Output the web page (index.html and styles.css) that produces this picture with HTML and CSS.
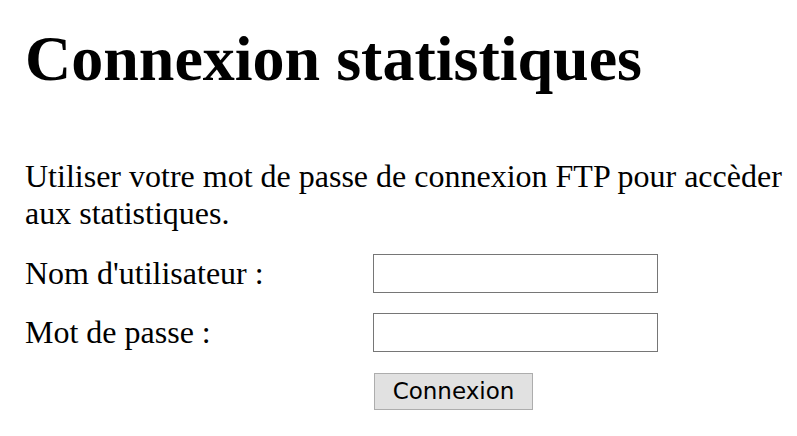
FILE: index.html
```html
<!DOCTYPE html>
<html lang="fr">
<head>
  <meta charset="UTF-8">
  <title>Connexion statistiques</title>
  <link rel="stylesheet" href="styles.css">
</head>
<body>

  <h1>Connexion statistiques</h1>

  <p class="intro">Utiliser votre mot de passe de connexion FTP pour accèder aux statistiques.</p>

  <form class="login" method="post" action="">
    <label for="user">Nom d'utilisateur :</label>
    <input type="text" id="user" name="user">

    <label for="pass">Mot de passe :</label>
    <input type="password" id="pass" name="pass">

    <span></span>
    <div><button type="submit">Connexion</button></div>
  </form>

</body>
</html>
```

FILE: styles.css
```css
body {
  margin: 0;
  padding: 0 4px 0 25px;
  background: #fff;
  color: #000;
  font-family: "Liberation Serif", "Times New Roman", serif;
  font-size: 32px;
  line-height: 37px;
}
h1 {
  font-size: 64px;
  font-weight: bold;
  margin: 22px 0 62px;
  line-height: 74px;
}
.intro {
  margin: 0 0 22px;
}
.login {
  display: grid;
  grid-template-columns: 348px 285px;
  row-gap: 20px;
  align-items: center;
}
.login input {
  box-sizing: border-box;
  width: 285px;
  height: 39px;
  margin: 0;
  border: 1px solid #767676;
  font-size: 20px;
  padding: 2px 4px;
}
button {
  box-sizing: border-box;
  width: 159px;
  height: 37px;
  margin: 1px 0 0 1px;
  padding: 0;
  background: #e1e1e1;
  border: 1px solid #adadad;
  color: #000;
  font-family: "DejaVu Sans", Verdana, sans-serif;
  font-size: 23px;
  line-height: 35px;
  vertical-align: top;
}
```
